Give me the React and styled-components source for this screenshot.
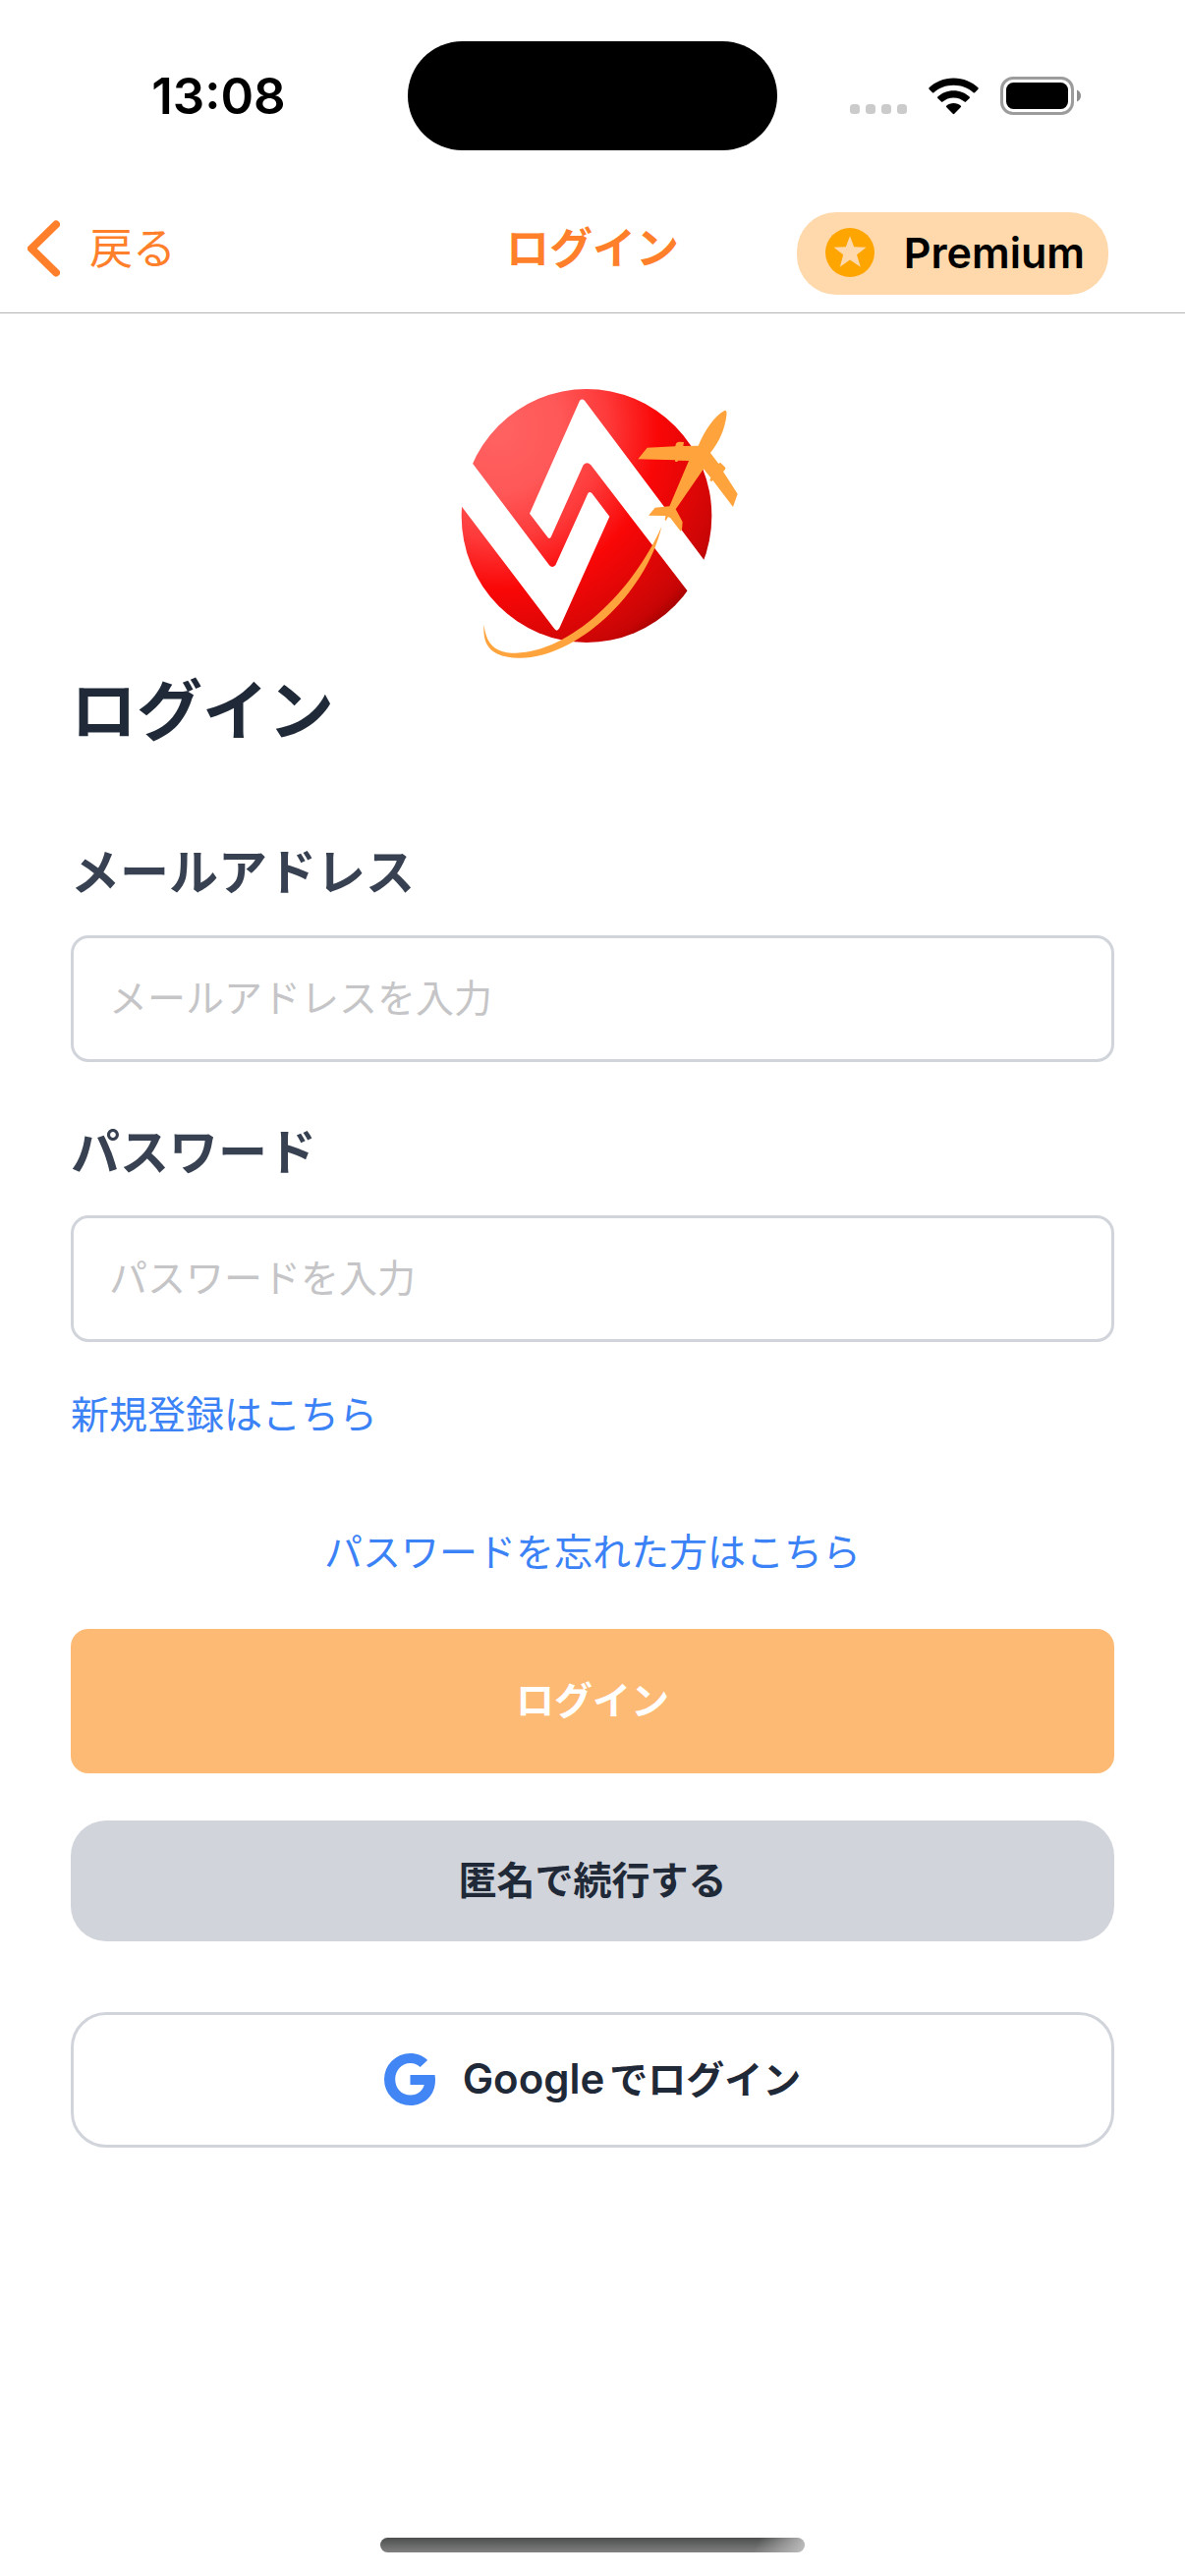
import React from "react";
import styled, { createGlobalStyle } from "styled-components";

const GlobalStyle = createGlobalStyle`
  *, *::before, *::after { box-sizing: border-box; }
  body {
    margin: 0;
    background: #fff;
    color: #1f2937;
    font-family: Inter, "Noto Sans CJK JP", sans-serif;
  }
  button, input { font-family: inherit; }
`;

const Screen = styled.div`
  min-height: 100vh;
  display: flex;
  flex-direction: column;
`;

const StatusBar = styled.div`
  display: grid;
  grid-template-columns: 1fr 376px 1fr;
  align-items: center;
  justify-items: center;
  padding: 42px 30px 33px;
`;

const Time = styled.time`
  font-size: 51px;
  line-height: 60px;
  font-weight: 600;
  color: #000;
`;

const Island = styled.div`
  width: 100%;
  height: 111px;
  border-radius: 56px;
  background: #000;
`;

const StatusIcons = styled.div`
  display: flex;
  align-items: center;
  gap: 22px;
  padding-right: 2px;
`;

const NavBar = styled.header`
  display: grid;
  grid-template-columns: 1fr auto 1fr;
  align-items: center;
  min-height: 133px;
  padding: 2px 28px 0;
  border-bottom: 1px solid #b2b2b2;
`;

const NavSide = styled.div`
  display: flex;
  justify-content: ${(p) => (p.$end ? "flex-end" : "flex-start")};
  padding: ${(p) => (p.$end ? "10px 50px 0 0" : "0")};
`;

const BackButton = styled.button`
  display: flex;
  align-items: center;
  gap: 30px;
  padding: 0;
  border: 0;
  background: none;
  color: #ff7f2a;
  font-size: 44px;
  line-height: 60px;
`;

const NavTitle = styled.div`
  color: #ff7f2a;
  font-size: 44px;
  line-height: 60px;
  font-weight: 600;
`;

const PremiumButton = styled.button`
  display: flex;
  align-items: center;
  gap: 30px;
  height: 84px;
  padding: 0 24px 2px 29px;
  border: 0;
  border-radius: 40px;
  background: #ffd8ab;
  color: #000;
  font-size: 43px;
  font-weight: 600;
`;

const Content = styled.main`
  display: flex;
  flex-direction: column;
  padding: 64px 72px;
`;

const Logo = styled.svg`
  width: 300px;
  height: 300px;
  align-self: center;
`;

const Heading = styled.h1`
  margin: 0 0 92px;
  font-size: 67px;
  line-height: 82px;
  font-weight: 600;
`;

const Form = styled.form`
  display: flex;
  flex-direction: column;
`;

const Field = styled.div`
  display: flex;
  flex-direction: column;
  gap: 33px;
  margin-bottom: ${(p) => (p.$last ? "50px" : "61px")};
`;

const Label = styled.label`
  color: #374151;
  font-size: 50px;
  line-height: 62px;
  font-weight: 600;
`;

const Input = styled.input`
  width: 100%;
  height: 129px;
  padding: 0 36px 2px;
  border: 3px solid #d1d5db;
  border-radius: 18px;
  background: #fff;
  color: #1f2937;
  font-size: 39px;
  outline: none;
  &::placeholder { color: #c5c5c7; opacity: 1; }
`;

const TextLink = styled.a`
  align-self: ${(p) => (p.$center ? "center" : "flex-start")};
  margin-bottom: ${(p) => (p.$center ? "54px" : "92px")};
  color: #3b82f6;
  font-size: 39px;
  line-height: 48px;
  text-decoration: none;
`;

const ActionButton = styled.button`
  display: flex;
  align-items: center;
  justify-content: center;
  width: 100%;
  padding: 0 0 2px;
  border: 0;
  font-size: 39px;
  line-height: 48px;
  font-weight: 600;
`;

const LoginButton = styled(ActionButton)`
  height: 147px;
  margin-bottom: 48px;
  border-radius: 18px;
  background: #fdba74;
  color: #fff;
`;

const GuestButton = styled(ActionButton)`
  height: 123px;
  margin-bottom: 72px;
  border-radius: 36px;
  background: #d1d5db;
  color: #1f2937;
`;

const GoogleButton = styled(ActionButton)`
  height: 138px;
  gap: 28px;
  border: 3px solid #d1d5db;
  border-radius: 36px;
  background: #fff;
  color: #1f2937;
`;

const GoogleText = styled.span`
  display: flex;
  align-items: baseline;
  gap: 5px;
`;

const Latin = styled.span`
  font-size: 42px;
`;

const HomeArea = styled.footer`
  display: flex;
  justify-content: center;
  margin-top: auto;
  padding-bottom: 24px;
`;

const HomeIndicator = styled.div`
  width: 432px;
  height: 15px;
  border-radius: 8px;
  background:
    linear-gradient(115deg, transparent 88%, #b8b8b8 99%),
    linear-gradient(#4c4f4d, #808080);
`;

function CellDots() {
  return (
    <svg width="58" height="38" viewBox="0 0 58 38" fill="#cbcbcb" aria-hidden="true">
      {[0, 16, 32, 48].map((x) => (
        <rect key={x} x={x} y="27" width="10" height="10" rx="3.5" />
      ))}
    </svg>
  );
}

function WifiIcon() {
  return (
    <svg width="51" height="38" viewBox="0 0 51 38" aria-hidden="true">
      <path d="M25.500 0.500C35.500 0.500 44.500 4.500 50.500 10.300Q51 11 50.500 11.700L47 15.200Q46.300 15.700 45.600 15.200C40.300 10.400 33.300 7.700 25.500 7.700S10.700 10.400 5.400 15.200Q4.700 15.700 4 15.200L0.500 11.700Q0 11 0.500 10.300C6.500 4.500 15.500 0.500 25.500 0.500Z" />
      <path d="M25.500 13.200C31.800 13.200 37.500 15.600 41.700 19.500Q42.300 20.300 41.700 21L38 24.600Q37.300 25.200 36.600 24.600C33.600 21.900 29.800 20.400 25.500 20.400S17.400 21.900 14.400 24.600Q13.700 25.200 13 24.600L9.300 21Q8.700 20.300 9.300 19.500C13.500 15.600 19.200 13.200 25.500 13.200Z" />
      <path d="M25.500 25.900C28.300 25.900 30.900 26.900 32.900 28.700Q33.500 29.400 32.900 30.100L26.300 36.800Q25.500 37.500 24.700 36.800L18.100 30.100Q17.500 29.400 18.100 28.700C20.100 26.900 22.700 25.900 25.500 25.900Z" />
    </svg>
  );
}

function BatteryIcon() {
  return (
    <svg width="82" height="39" viewBox="0 0 82 39" aria-hidden="true">
      <rect x="1.500" y="1.500" width="72" height="36" rx="11.500" fill="none" stroke="#9c9c9c" strokeWidth="3" />
      <rect x="6" y="6" width="63" height="27" rx="7.500" />
      <path d="M78 13.500C80.500 14.500 82 16.800 82 19.500S80.500 24.500 78 25.500Z" fill="#8e8e8e" />
    </svg>
  );
}

function ChevronIcon() {
  return (
    <svg width="33" height="58" viewBox="0 0 33 58" fill="none" stroke="#ff7f2a" strokeWidth="8" strokeLinecap="round" strokeLinejoin="round" aria-hidden="true">
      <path d="M29 4.500L4 29L29 53.500" />
    </svg>
  );
}

function StarBadge() {
  return (
    <svg width="50" height="50" viewBox="0 0 50 50" aria-hidden="true">
      <circle cx="25" cy="25" r="25" fill="#ffa500" />
      <path fill="#ffd8ab" d="M25 8.200L29.200 19.200L41.600 19.800L32 27.200L35.800 39.800L25 32.600L14.800 39.800L18.200 27.200L8.600 19.800L20.800 19.200Z" />
    </svg>
  );
}

function GoogleG() {
  return (
    <svg width="52" height="53" viewBox="0 0 52 53" aria-hidden="true">
      <path fill="#4285f4" d="M26.500 22H51.500C51.900 24 52 25.500 52 27C52 42.500 41.500 53 26.500 53A26.500 26.500 0 0 1 26.500 0C33.500 0 39.500 2.600 44.100 6.900L36.600 14.100C34.600 12.200 31 10.100 26.500 10.100C18 10.100 11.200 17.200 11.200 26.500S18 42.500 26.500 42.500C35.800 42.500 40 36 40.700 32H26.500Z" />
    </svg>
  );
}

function BrandLogo() {
  return (
    <Logo viewBox="39 39 900 900" role="img" aria-label="ロゴ">
      <defs>
        <radialGradient id="globe" gradientUnits="userSpaceOnUse" cx="200" cy="200" r="800">
          <stop offset="0" stopColor="#ff6262" />
          <stop offset="0.240" stopColor="#ff5858" />
          <stop offset="0.420" stopColor="#fe3a3a" />
          <stop offset="0.610" stopColor="#fa0707" />
          <stop offset="0.850" stopColor="#d30606" />
          <stop offset="0.910" stopColor="#c70505" />
          <stop offset="0.990" stopColor="#930000" />
        </radialGradient>
      </defs>
      <ellipse cx="471" cy="465" rx="382" ry="387" fill="url(#globe)" />
      <path fill="#fff" d="M450 113Q457 106 465 113L870 654L820 748L484 310Q472 298 461 310L362 530Q357 537 352 530L297 458Z" />
      <path fill="#fff" d="M123 305L357 616Q366 626 376 616L475 397Q480 389 487 396L541 467L388 808Q380 822 371 808L90 437L50 384L60 221Z" />
      <path fill="#ffa43c" d="M700 498C650 710 430 905 262 899C195 897 150 875 158 798C165 870 205 884 255 884C420 880 610 700 700 498Z" />
      <path fill="#ffa43c" d="M893 143C899 143 899 148 898 160C893 200 877 238 849 273L874 306L879 302L895 318L894 323L888 330L932 398L918 438L856 356L853 361L847 357L850 349L828 322L743 445L764 484L762 507L758 512L727 472L720 468L713 480L710 478L712 465L660 464L680 440L724 436L783 297L750 296L748 300L742 300L741 295L628 292L656 257L742 253Q743 240 753 239L768 240L766 252L812 251C830 207 860 160 893 143Z" />
    </Logo>
  );
}

export default function App() {
  return (
    <Screen>
      <GlobalStyle />
      <StatusBar>
        <Time>13:08</Time>
        <Island />
        <StatusIcons>
          <CellDots />
          <WifiIcon />
          <BatteryIcon />
        </StatusIcons>
      </StatusBar>
      <NavBar>
        <NavSide>
          <BackButton type="button">
            <ChevronIcon />
            戻る
          </BackButton>
        </NavSide>
        <NavTitle>ログイン</NavTitle>
        <NavSide $end>
          <PremiumButton type="button">
            <StarBadge />
            Premium
          </PremiumButton>
        </NavSide>
      </NavBar>
      <Content>
        <BrandLogo />
        <Heading>ログイン</Heading>
        <Form onSubmit={(e) => e.preventDefault()}>
          <Field>
            <Label htmlFor="email">メールアドレス</Label>
            <Input id="email" type="email" placeholder="メールアドレスを入力" />
          </Field>
          <Field $last>
            <Label htmlFor="password">パスワード</Label>
            <Input id="password" type="password" placeholder="パスワードを入力" />
          </Field>
          <TextLink href="#register">新規登録はこちら</TextLink>
          <TextLink href="#reset" $center>パスワードを忘れた方はこちら</TextLink>
          <LoginButton type="submit">ログイン</LoginButton>
          <GuestButton type="button">匿名で続行する</GuestButton>
          <GoogleButton type="button">
            <GoogleG />
            <GoogleText>
              <Latin>Google</Latin>
              でログイン
            </GoogleText>
          </GoogleButton>
        </Form>
      </Content>
      <HomeArea>
        <HomeIndicator />
      </HomeArea>
    </Screen>
  );
}
